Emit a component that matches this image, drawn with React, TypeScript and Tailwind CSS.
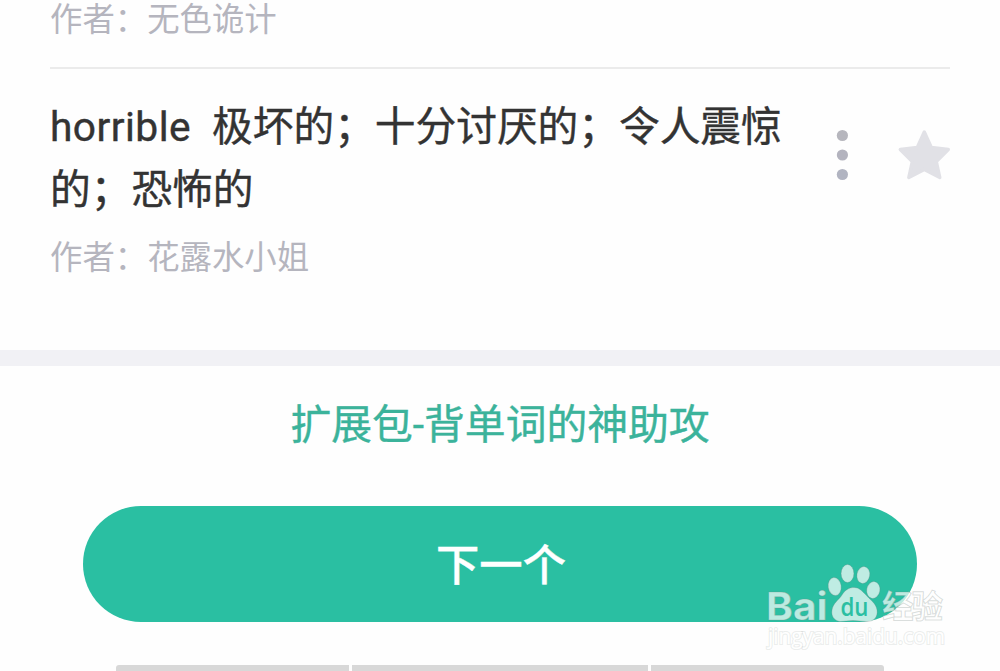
const notes = [
  { id: 1, author: '花露水小姐', word: 'horrible', meaning: '极坏的；十分讨厌的；令人震惊的；恐怖的' },
]

function MoreDots() {
  return (
    <svg width="12" height="52" viewBox="0 0 12 52" className="shrink-0">
      <circle cx="6.4" cy="6.5" r="5.6" fill="#b6b6bd" />
      <circle cx="6.4" cy="26" r="5.6" fill="#b3b3be" />
      <circle cx="6.4" cy="45.5" r="5.6" fill="#b1b4c1" />
    </svg>
  )
}

function Star() {
  return (
    <svg width="54" height="52" viewBox="0 0 54 52" className="shrink-0">
      <path
        d="M27.3 3 L34.3 18.500 L51.300 20.500 L39.300 32.500 L42.800 48.500 L27.300 40.500 L11.800 48.500 L15.300 32.500 L3.300 20.500 L20.300 18.500 Z"
        fill="#e1e1e6"
        stroke="#e1e1e6"
        strokeWidth="3.4"
        strokeLinejoin="round"
      />
    </svg>
  )
}

function Watermark() {
  return (
    <svg
      width="200"
      height="100"
      viewBox="0 0 200 100"
      className="absolute left-[760px] top-[560px]"
      fontFamily='"Open Sans", "Noto Sans CJK SC", sans-serif'
    >
      <g fill="#fff" fillOpacity="0.7" stroke="#6f7f7a" strokeOpacity="0.27" strokeWidth="1">
        <text x="6" y="59.5" fontSize="38.500" fontWeight="700" fontFamily='Inter, sans-serif' textLength="61.500" lengthAdjust="spacingAndGlyphs">
          Bai
        </text>
        <ellipse cx="74.7" cy="26.5" rx="6.5" ry="9" transform="rotate(-8 74.7 26.5)" />
        <ellipse cx="87.5" cy="13.5" rx="6.4" ry="9" />
        <ellipse cx="103.3" cy="15" rx="6.4" ry="8.5" transform="rotate(10 103.3 15)" />
        <ellipse cx="113.3" cy="30" rx="6.6" ry="8.5" transform="rotate(10 113.3 30)" />
        <path d="M94 27.500 C99 27.500 102 31 106 35 C110 40 116 43 117 50 C118 57 114 61.500 107 61.500 C102 61.500 98 60.500 93 60.500 C88 60.500 84 61.500 80 61.500 C74 60.500 71 56 72 50 C73 43 79 40 82 35 C85 30 89 27.500 94 27.500 Z" />
        <text x="122" y="57.500" fontSize="31.500" fontWeight="700" fontFamily='"Liberation Sans", "Noto Sans CJK SC", sans-serif' textLength="61">
          经验
        </text>
        <text x="8" y="83.500" fontSize="21" textLength="177" lengthAdjust="spacingAndGlyphs" fillOpacity="1" strokeWidth="2.2" strokeOpacity="0.14" paintOrder="stroke">
          jingyan.baidu.com
        </text>
      </g>
      <text x="80.500" y="56" fontSize="25" fontWeight="600" fontFamily='"Open Sans", sans-serif' fill="#2abfa2" textLength="28" lengthAdjust="spacingAndGlyphs">
        du
      </text>
    </svg>
  )
}

export default function App() {
  return (
    <div className="relative flex h-[671px] w-[1000px] flex-col overflow-hidden bg-[#fefefe] font-[Roboto,'Noto_Sans_CJK_SC',sans-serif]">
      {/* previous note, only its author is still visible */}
      <div className="mx-[50px] h-[69px] shrink-0 border-b-2 border-[#ebebeb] pt-px">
        <p className="h-[38px] text-[32.4px] leading-[38px] text-[#b5b5be]">作者：无色诡计</p>
      </div>

      {notes.map((note) => (
        <div key={note.id} className="flex h-[281px] shrink-0 items-start pl-[50px] pt-[27px]">
          <div className="w-[740px]">
            <p className="text-[40.7px] leading-[63px] text-[#333333] [-webkit-text-stroke:0.4px_#333333]">
              <span className="tracking-[0.45px]">{note.word}{'\u00a0 '}</span>
              {note.meaning}
            </p>
            <p className="mt-[17px] text-[32.4px] leading-[38px] text-[#b5b5be]">作者：{note.author}</p>
          </div>
          <div className="ml-[46px] mt-[33px] flex items-center gap-[49px]">
            <MoreDots />
            <Star />
          </div>
        </div>
      ))}

      <div className="h-4 shrink-0 bg-[#f1f1f5]" />

      <div className="flex h-[140px] shrink-0 justify-center pt-[28px]">
        <a className="text-[40.8px] leading-[62px] text-[#3bb39b] [-webkit-text-stroke:0.4px_#3bb39b]">扩展包-背单词的神助攻</a>
      </div>

      <button className="mx-auto flex h-[116px] w-[834px] shrink-0 items-center justify-center rounded-full bg-[#2abfa2] pl-[2px] pt-[6px] text-[43.3px] font-medium text-white [-webkit-text-stroke:0.4px_white]">
        下一个
      </button>

      <div className="mx-auto mt-[43px] flex h-4 w-[768px] shrink-0 gap-[3px] overflow-hidden rounded-t-[3px]">
        <div className="w-[233px] bg-[#d8d8d8]" />
        <div className="w-[296px] bg-[#d8d8d8]" />
        <div className="flex-1 bg-[#d8d8d8]" />
      </div>

      <Watermark />
    </div>
  )
}
